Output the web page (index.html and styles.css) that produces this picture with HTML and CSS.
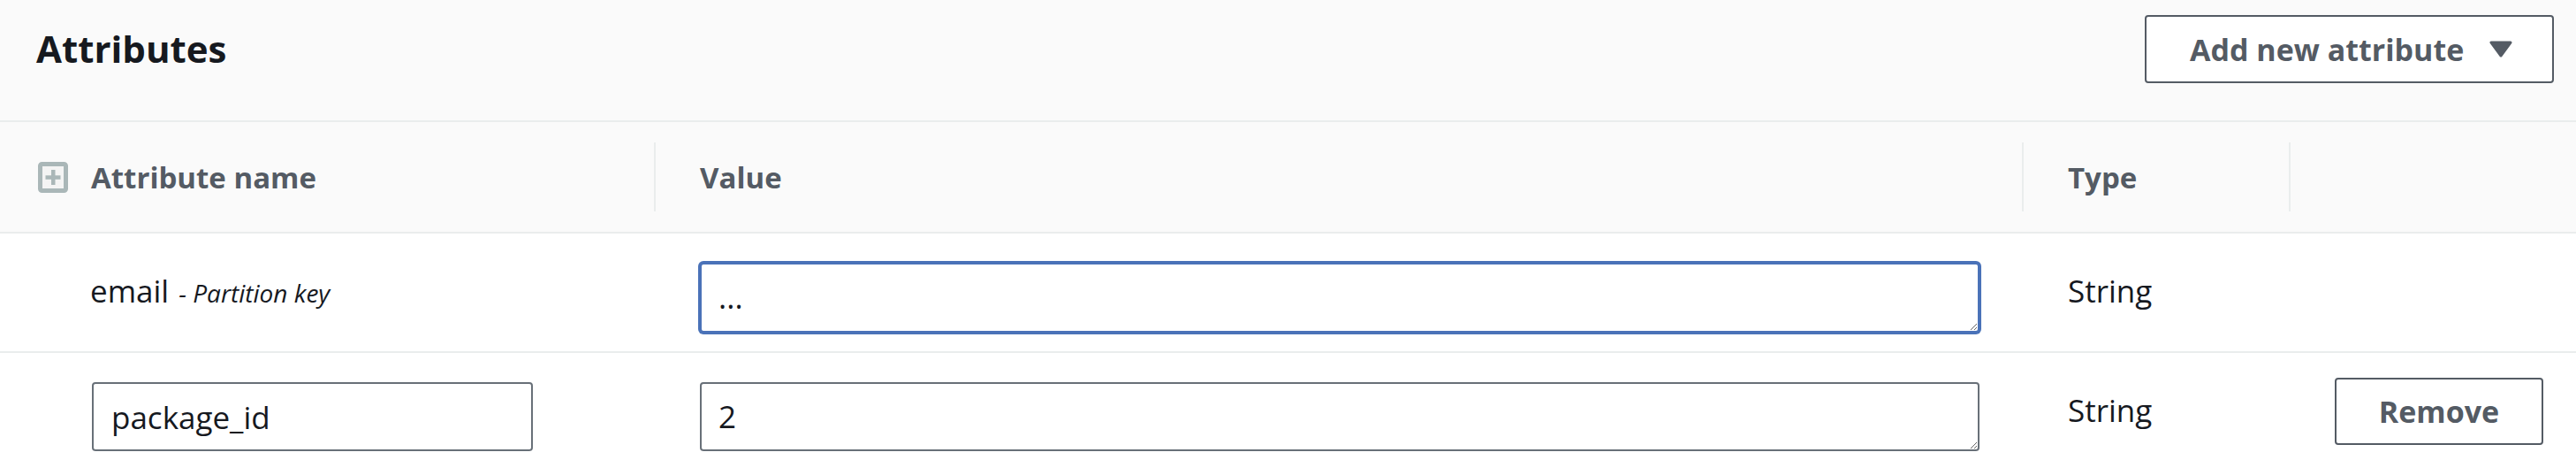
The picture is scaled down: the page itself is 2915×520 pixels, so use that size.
FILE: index.html
```html
<!DOCTYPE html>
<html lang="en">
<head>
<meta charset="utf-8">
<title>Attributes</title>
<link rel="stylesheet" href="styles.css">
</head>
<body>
<div class="panel">
  <div class="panel-head">
    <h2 class="title">Attributes</h2>
    <button class="btn btn-add" type="button">
      <span class="btn-label">Add new attribute</span>
      <svg class="caret" width="26" height="19" viewBox="0 0 26 19"><polygon points="2,2 24,2 13,17" fill="#545b64" stroke="#545b64" stroke-width="3" stroke-linejoin="round"/></svg>
    </button>
  </div>
  <div class="row row-head">
    <div class="th th-name">
      <svg class="expand" width="34" height="35" viewBox="0 0 34 35">
        <rect x="2.5" y="2.5" width="29" height="30" rx="2" fill="#f4f4f4" stroke="#aab7b8" stroke-width="5"/>
        <rect x="15" y="9" width="4.5" height="17" fill="#aab7b8"/>
        <rect x="8.5" y="15.3" width="17" height="4.5" fill="#aab7b8"/>
      </svg>
      <span>Attribute name</span>
    </div>
    <div class="th"><div class="th-inner">Value</div></div>
    <div class="th"><div class="th-inner">Type</div></div>
    <div class="th"><div class="th-inner"></div></div>
  </div>
  <div class="row row-1">
    <div class="cell cell-name cell-text">email<em class="pk">- Partition key</em></div>
    <div class="cell cell-field"><textarea class="ta ta-focus">...</textarea></div>
    <div class="cell cell-text">String</div>
    <div class="cell"></div>
  </div>
  <div class="row row-2">
    <div class="cell cell-name cell-field"><input class="inp" type="text" value="package_id"></div>
    <div class="cell cell-field"><textarea class="ta">2</textarea></div>
    <div class="cell cell-text">String</div>
    <div class="cell cell-btn"><button class="btn btn-remove" type="button">Remove</button></div>
  </div>
</div>
</body>
</html>
```
FILE: styles.css
```css
* { box-sizing: border-box; }

html, body {
  margin: 0;
  padding: 0;
  background: #ffffff;
}

body {
  font-family: "Open Sans", "Noto Sans", sans-serif;
  color: #16191f;
}

.panel-head {
  height: 138px;
  background: #fafafa;
  border-bottom: 2px solid #eaeded;
  display: flex;
  justify-content: space-between;
  align-items: flex-start;
  padding: 17px 25px 0 41px;
}

.title {
  margin: 9px 0 0 0;
  font-size: 42px;
  line-height: 57px;
  font-weight: 700;
  color: #16191f;
}

.btn {
  font-family: "Open Sans", "Noto Sans", sans-serif;
  font-weight: 700;
  font-size: 34px;
  color: #545b64;
  background: #ffffff;
  border: 2px solid #545b64;
  border-radius: 4px;
  display: flex;
  align-items: center;
  justify-content: center;
  white-space: nowrap;
  cursor: pointer;
}

.btn-add {
  width: 463px;
  height: 77px;
  padding: 0 0 0 49px;
  gap: 29px;
  justify-content: flex-start;
}

.btn-label { white-space: nowrap; flex: none; }

.caret { display: block; flex: none; }

.row {
  display: grid;
  grid-template-columns: 740px 1548px 302px 1fr;
  border-bottom: 2px solid #eaeded;
}

.row-head {
  height: 126px;
  background: #fafafa;
  align-items: center;
}

.th {
  font-size: 33px;
  font-weight: 700;
  color: #545b64;
}

.th-name {
  display: flex;
  align-items: center;
  gap: 26px;
  padding-left: 43px;
}

.expand { display: block; flex: none; }

.th-inner {
  height: 78px;
  border-left: 2px solid #eaeded;
  padding-left: 50px;
  display: flex;
  align-items: center;
}

.row-1 { height: 135px; align-items: start; }
.row-2 { height: 140px; align-items: start; }

.cell {
  padding-left: 52px;
  font-size: 35px;
}

.cell-name { padding-left: 102px; }

.cell-text {
  padding-top: 41px;
  line-height: 48px;
}

.pk {
  font-size: 28px;
  font-style: italic;
  margin-left: 11px;
}

.cell-field { padding-top: 33px; }

.ta {
  display: block;
  width: 1448px;
  height: 79px;
  margin: 0;
  border: 2px solid #687078;
  border-radius: 4px;
  padding: 13px 19px;
  font-family: "Open Sans", "Noto Sans", sans-serif;
  font-size: 35px;
  color: #16191f;
  background: #ffffff;
  overflow: hidden;
  outline: none;
}

.ta-focus {
  border-color: #4a72b8;
  box-shadow: 0 0 0 2px #4a72b8;
}

.row-2 .ta { height: 78px; }

.inp {
  display: block;
  width: 499px;
  height: 78px;
  margin: 0 0 0 2px;
  border: 2px solid #687078;
  border-radius: 4px;
  padding: 0 20px;
  font-family: "Open Sans", "Noto Sans", sans-serif;
  font-size: 35px;
  color: #16191f;
  background: #ffffff;
  outline: none;
}

.cell-btn { padding-top: 28px; }

.btn-remove {
  width: 236px;
  height: 76px;
  padding: 0;
}
```
